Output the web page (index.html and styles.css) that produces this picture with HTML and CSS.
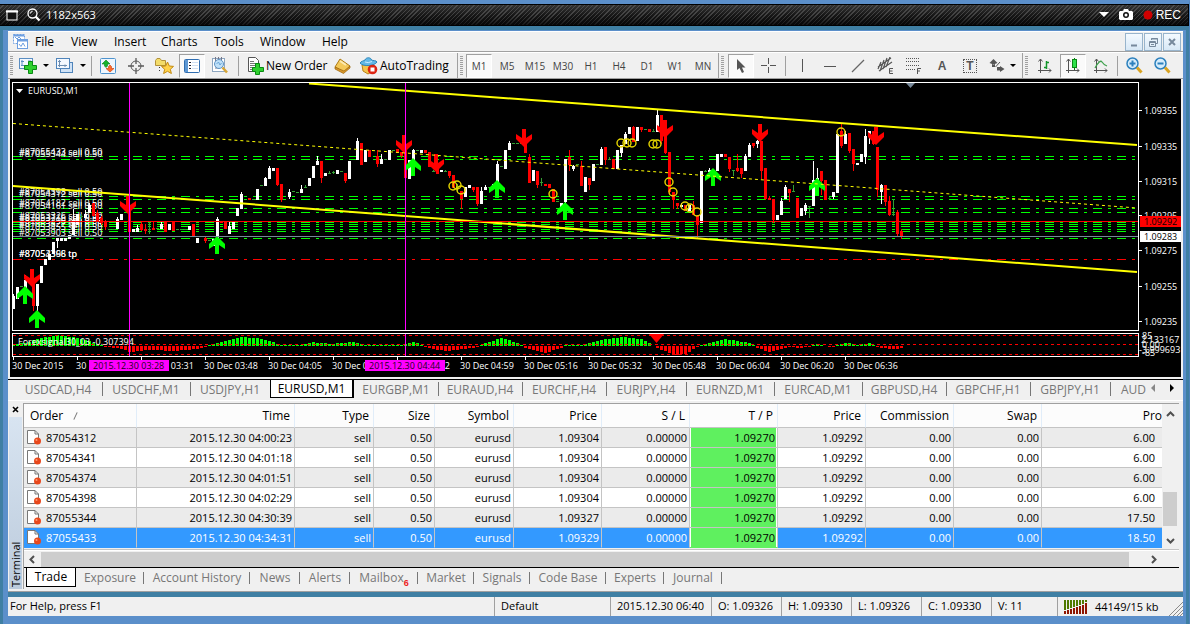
FILE: index.html
```html
<!DOCTYPE html>
<html lang="en">
<head>
<meta charset="utf-8">
<title>EURUSD,M1</title>
<link rel="stylesheet" href="styles.css">
</head>
<body>
<div class="screen">
<header class="recorder">
  <svg class="rec-window" width="12" height="11"><rect x="1" y="1" width="10" height="9" fill="#111" stroke="#fff"/><path d="M0 1.500H12" stroke="#fff" stroke-width="2"/></svg>
  <svg class="rec-zoom" width="14" height="14" fill="none" stroke="#fff"><circle cx="5.500" cy="5.500" r="4.500" stroke-width="1.300"/><path d="M3.500 5.500a2 2 0 0 1 2-2"/><path d="M8.500 8.500L12.500 12.500" stroke-width="2.400"/></svg>
  <span class="rec-size">1182x563</span>
  <svg class="rec-caret" width="10" height="6"><path d="M0 0H10L5 5Z" fill="#fff"/></svg>
  <svg class="rec-camera" width="14" height="12"><path d="M1 2H4L5 0H9L10 2H13L14 3V10L13 11H1L0 10V3Z" fill="#fff"/><circle cx="7" cy="6" r="3" fill="#111"/><circle cx="7" cy="6" r="1.500" fill="#fff"/></svg>
  <svg class="rec-dot" width="10" height="10"><circle cx="5" cy="5" r="4.500" fill="#d00000"/></svg>
  <span class="rec-label">REC</span>
</header>

<main class="window">
  <nav class="menubar">
    <svg class="app-icon" width="15" height="15" fill="none" stroke="#6e9fe0"><rect x=".5" y=".5" width="11" height="9" fill="#fff" stroke-dasharray="2 1"/><path d="M2 3L4 5L6 3L8 5"/><path d="M.5 1.500H11" stroke-width="2"/><rect x="4.500" y="5.500" width="10" height="9" fill="#fff"/><path d="M4.500 6.500H14" stroke-width="2"/><path d="M6 10L8 12.500L10 9L12 12.500"/></svg>
    <button class="menu m-file">File</button>
    <button class="menu m-view">View</button>
    <button class="menu m-insert">Insert</button>
    <button class="menu m-charts">Charts</button>
    <button class="menu m-tools">Tools</button>
    <button class="menu m-window">Window</button>
    <button class="menu m-help">Help</button>
    <div class="mdi">
      <button class="mdi-btn" aria-label="Minimize"><svg width="16" height="16"><path d="M5 11.500H11" stroke="#77899c" stroke-width="2"/></svg></button>
      <button class="mdi-btn" aria-label="Restore"><svg width="16" height="16" fill="none" stroke="#77899c"><path d="M6.500 6V4.500H12.500V9.500H11M6 5H13"/><path d="M4.500 7.500H10.500V12.500H4.500ZM4 8.500H11M6 10.500H9"/></svg></button>
      <button class="mdi-btn" aria-label="Close"><svg width="16" height="16"><path d="M5 5L11 11M11 5L5 11" stroke="#77899c" stroke-width="2"/></svg></button>
    </div>
  </nav>

  <div class="toolbar">
    <div class="group g-main">
      <i class="grip"></i>
      <button class="tool drop" aria-label="New chart"><svg width="19" height="17"><rect x=".5" y="1.500" width="13" height="10" fill="#f4f9ff" stroke="#5b8ec2"/><path d="M3 3V9M2 4.500H5M2 8.500H6M9 4H12" stroke="#5b8ec2" fill="none"/><path d="M9.500 4.500H13.500V8.500H17.500V12.500H13.500V16.500H9.500V12.500H5.500V8.500H9.500Z" fill="#2fd02f" stroke="#0a8a14"/></svg><span class="caret"></span></button>
      <button class="tool drop" aria-label="Profiles"><svg width="19" height="17"><rect x="4.500" y="5.500" width="12" height="10" fill="#cfe2f6" stroke="#4f84ba"/><rect x=".5" y="1.500" width="13" height="10" fill="#f4f9ff" stroke="#4f84ba"/><path d="M3.500 3V10M2 4.500H5M2 8.500H11M9 7.500V10" stroke="#6f8eb0" fill="none"/></svg><span class="caret"></span></button>
      <i class="sep"></i>
      <button class="tool" aria-label="Market Watch"><svg width="16" height="16"><rect x=".5" y=".5" width="15" height="15" rx="1" fill="#eff6fd" stroke="#4f94cf"/><path d="M6 2L10 6H7.500V8L6 9.500L4.500 8V6H2Z" fill="#16b32a" stroke="#08801a" stroke-width=".6"/><path d="M10 14L6 10.500H8.500V8.500L10 7L11.500 8.500V10.500H14Z" fill="#ff6a2b" stroke="#c93c08" stroke-width=".6"/></svg></button>
      <button class="tool" aria-label="Data Window"><svg width="16" height="16" fill="none" stroke="#5a5a5a"><circle cx="8" cy="8" r="5"/><path d="M8 0V6M8 10V16M0 8H6M10 8H16" stroke-width="1.300"/></svg></button>
      <button class="tool" aria-label="Navigator"><svg width="19" height="17"><path d="M.5 3.500L2 1.500H5L6.500 3.500H10.500V8.500H.5Z" fill="#f3dc6a" stroke="#b3923a"/><path d="M4.500 10V16" stroke="#333" stroke-dasharray="1 2"/><path d="M12.500 5L14.300 9L18.500 9.400L15.300 12.300L16.400 16.500L12.500 14.300L8.600 16.500L9.700 12.300L6.500 9.400L10.700 9Z" fill="#ffd24a" stroke="#c28a10"/></svg></button>
      <button class="tool pressed" aria-label="Terminal"><svg width="16" height="14"><rect x=".5" y=".5" width="15" height="13" rx="1" fill="#fff" stroke="#2f6db0"/><path d="M1 1H4V13H1Z" fill="#5d97d3"/><path d="M5 3.500H7M5 6.500H7M5 9.500H7" stroke="#223"/><path d="M8 3.500H14M8 6.500H14M8 9.500H14" stroke="#cfdff2"/></svg></button>
      <button class="tool" aria-label="Strategy Tester"><svg width="18" height="17"><rect x="1.500" y="1.500" width="12" height="13" fill="#fff" stroke="#8da6c0"/><path d="M4.500 0V4M7.500 0V3M10.500 0V3M4 11H8" stroke="#778"/><circle cx="8" cy="7" r="4.500" fill="#bfe0f8" stroke="#5e93c4"/><path d="M5.500 7L7.500 5L9 8L10.500 6" fill="none" stroke="#6aa6d8"/><path d="M11.500 10.500L16 15.500" stroke="#d7a536" stroke-width="2.600"/></svg></button>
      <i class="sep wide"></i>
      <button class="tool text t-order"><svg width="17" height="18"><path d="M1.500 .5H8.500L11.500 3.500V14.500H1.500Z" fill="#fff" stroke="#555"/><path d="M3 4.500H7M3 6.500H10M3 8.500H8M3 10.500H7M3 12.500H6" stroke="#777"/><path d="M8.500 6.500H12.500V10.500H16.500V14.500H12.500V17.500H8.500V14.500H5.500V10.500H8.500Z" fill="#2fd02f" stroke="#0a8a14"/></svg>New Order</button>
      <button class="tool" aria-label="MetaEditor"><svg width="17" height="16"><path d="M6 1L16 8L10 14L1 9Z" fill="#f4c95a" stroke="#ad7a14"/><path d="M1 9L1 11L9.500 15.500L16 10V8L10 13Z" fill="#d8952a" stroke="#9a650c" stroke-width=".7"/><path d="M6 3L12 7" stroke="#fdeab0" stroke-width="2"/></svg></button>
      <button class="tool text t-auto"><svg width="18" height="18"><path d="M2 8L3 14L8 17L13 14L14 8Z" fill="#f3c34d" stroke="#b88318"/><path d="M0 6C1 4 4 4 5 3C6 0 11 0 11.500 3C13 4 16 3 17 5C15 9 3 10 0 6Z" fill="#62b8e6" stroke="#2c85ba"/><path d="M5 5Q8 6.500 12 4.500" fill="none" stroke="#c8eaff"/><circle cx="12.500" cy="12.500" r="4.800" fill="#dc2412"/><rect x="10.500" y="10.500" width="4" height="4" fill="#fff"/></svg>AutoTrading</button>
    </div>
    <div class="group g-frames">
      <i class="grip"></i>
      <button class="tool tf pressed">M1</button><button class="tool tf">M5</button><button class="tool tf">M15</button><button class="tool tf">M30</button><button class="tool tf">H1</button><button class="tool tf">H4</button><button class="tool tf">D1</button><button class="tool tf">W1</button><button class="tool tf">MN</button>
    </div>
    <div class="group g-draw">
      <i class="grip"></i>
      <button class="tool pressed" aria-label="Cursor"><svg width="14" height="16"><path d="M3 1V12L5.500 10L8 15L10 14L8 9.500H11.500Z" fill="#555"/></svg></button>
      <button class="tool" aria-label="Crosshair"><svg width="16" height="16"><path d="M7.500 0V6M7.500 9V15M0 7.500H6M9 7.500H15" stroke="#555"/></svg></button>
      <i class="sep"></i>
      <button class="tool" aria-label="Vertical line"><svg width="16" height="16"><path d="M8.500 1V14" stroke="#555"/></svg></button>
      <button class="tool" aria-label="Horizontal line"><svg width="16" height="16"><path d="M2 8.500H14" stroke="#555"/></svg></button>
      <button class="tool" aria-label="Trendline"><svg width="16" height="16"><path d="M2 14L14 2" stroke="#666" stroke-width="1.300"/></svg></button>
      <button class="tool" aria-label="Channel"><svg width="18" height="18" stroke="#555" fill="none"><path d="M1 10L14 1M2 14L15 5M3 14L7 3M6 12L10 1M9 10L13 0M1 12L4 5" stroke-width="1.200"/><path d="M16 11.500H12.500V16.500H16M12.500 14H15.500"/></svg></button>
      <button class="tool" aria-label="Fibonacci"><svg width="18" height="18" stroke="#555" fill="none"><path d="M1 1.500H15M1 4.500H15M1 8.500H15M1 12.500H10" stroke-dasharray="1 1"/><path d="M12.500 17V11.500H16M12.500 14H15"/></svg></button>
      <button class="tool letter" aria-label="Text">A</button>
      <button class="tool letter" aria-label="Text label"><span class="tbox">T</span></button>
      <button class="tool drop" aria-label="Arrows"><svg width="16" height="15"><path d="M4.500 1L8.500 5L4.500 6.500L.5 5Z M3 6V9H6V6ZM8 9H11V8L15.500 11L11 14V12.500H8Z" fill="#555"/><path d="M6.500 9L11 4" stroke="#555"/></svg><span class="caret"></span></button>
    </div>
    <div class="group g-view">
      <i class="grip"></i>
      <button class="tool" aria-label="Bar chart"><svg width="16" height="16" fill="none" stroke="#555"><path d="M3.500 1V15M1 12.500H14M1.500 3.500L3.500 1L5.500 3.500M12 10.500L14 12.500L12 14.500"/><path d="M9.500 3V11M9 4.500H12M7 9.500H10" stroke="#12952a" stroke-width="1.500"/></svg></button>
      <button class="tool pressed" aria-label="Candlesticks"><svg width="16" height="16" fill="none" stroke="#555"><path d="M3.500 1V15M1 12.500H14M1.500 3.500L3.500 1L5.500 3.500M12 10.500L14 12.500L12 14.500"/><path d="M9.500 0V12" stroke="#0a7a14"/><rect x="7.500" y="1.500" width="4" height="8" fill="#2ee24a" stroke="#0a8a14"/></svg></button>
      <button class="tool" aria-label="Line chart"><svg width="16" height="16" fill="none" stroke="#555"><path d="M3.500 1V15M1 12.500H14M1.500 3.500L3.500 1L5.500 3.500M12 10.500L14 12.500L12 14.500"/><path d="M2 10Q7 1 9 4T14 8" stroke="#3ea04c" stroke-width="1.300"/></svg></button>
      <i class="sep"></i>
      <button class="tool" aria-label="Zoom in"><svg width="17" height="17"><circle cx="6.500" cy="6.500" r="5.500" fill="#d5ecfb" stroke="#2c80bd" stroke-width="1.500"/><path d="M6.500 3.500V9.500M3.500 6.500H9.500" stroke="#2c80bd" stroke-width="2"/><path d="M11 10.500L15.500 15.500" stroke="#d9a321" stroke-width="3"/></svg></button>
      <button class="tool" aria-label="Zoom out"><svg width="17" height="17"><circle cx="6.500" cy="6.500" r="5.500" fill="#d5ecfb" stroke="#2c80bd" stroke-width="1.500"/><path d="M3.500 6.500H9.500" stroke="#2c80bd" stroke-width="2"/><path d="M11 10.500L15.500 15.500" stroke="#d9a321" stroke-width="3"/></svg></button>
    </div>
  </div>

  <section class="chart">
    <svg id="plot" class="plot"></svg>
    <svg id="scale" class="scale"></svg>
  </section>

  <nav class="chart-tabs">
    <button class="ctab w88">USDCAD,H4</button><button class="ctab w88">USDCHF,M1</button><button class="ctab w80 last">USDJPY,H1</button><button class="ctab w84 active">EURUSD,M1</button><button class="ctab w84">EURGBP,M1</button><button class="ctab w84">EURAUD,H4</button><button class="ctab w84">EURCHF,H4</button><button class="ctab w80">EURJPY,H4</button><button class="ctab w88">EURNZD,M1</button><button class="ctab w88">EURCAD,M1</button><button class="ctab w84">GBPUSD,H4</button><button class="ctab w84">GBPCHF,H1</button><button class="ctab w80">GBPJPY,H1</button><button class="ctab cut">AUD</button>
    <span class="tab-arrows"><svg width="4" height="8"><path d="M4 0V8L0 4Z" fill="#888"/></svg><svg width="4" height="8"><path d="M0 0V8L4 4Z" fill="#000"/></svg></span>
  </nav>

  <section class="terminal">
    <aside class="side">
      <button class="side-close" aria-label="Close"><svg width="7" height="7"><path d="M1 1L6 6M6 1L1 6" stroke="#000" stroke-width="1.600"/></svg></button>
      <div class="side-title">Terminal</div>
    </aside>
    <div class="panel">
      <div class="grid">
        <table class="orders">
          <colgroup><col class="c-order"><col class="c-time"><col class="c-type"><col class="c-size"><col class="c-sym"><col class="c-88"><col class="c-88"><col class="c-88"><col class="c-88"><col class="c-88"><col class="c-88"><col></colgroup>
          <thead><tr><th class="left">Order<span class="sort"></span></th><th>Time</th><th>Type</th><th>Size</th><th>Symbol</th><th>Price</th><th>S / L</th><th>T / P</th><th>Price</th><th>Commission</th><th>Swap</th><th class="end">Pro</th></tr></thead>
          <tbody id="rows"></tbody>
        </table>
        <div class="vscroll"><svg width="9" height="6"><path d="M1 5L4.500 1.500L8 5" fill="none" stroke="#505050" stroke-width="2"/></svg><span class="vthumb"></span><svg width="9" height="6"><path d="M1 1L4.500 4.500L8 1" fill="none" stroke="#505050" stroke-width="2"/></svg></div>
      </div>
      <div class="hscroll"><svg width="6" height="9"><path d="M5 1L1.500 4.500L5 8" fill="none" stroke="#505050" stroke-width="2"/></svg><span class="hthumb"></span><svg width="6" height="9"><path d="M1 1L4.500 4.500L1 8" fill="none" stroke="#505050" stroke-width="2"/></svg></div>
      <nav class="term-tabs">
        <button class="ttab active">Trade</button><button class="ttab t68">Exposure</button><button class="ttab t106">Account History</button><button class="ttab t50">News</button><button class="ttab t50">Alerts</button><button class="ttab t68">Mailbox<sub class="badge">6</sub></button><button class="ttab t56">Market</button><button class="ttab t56">Signals</button><button class="ttab t76">Code Base</button><button class="ttab t58">Experts</button><button class="ttab t58">Journal</button>
      </nav>
    </div>
  </section>

  <footer class="status">
    <span class="st help">For Help, press F1</span>
    <span class="st s-profile">Default</span>
    <span class="st s-date">2015.12.30 06:40</span>
    <span class="st s-val">O: 1.09326</span>
    <span class="st s-val">H: 1.09330</span>
    <span class="st s-val">L: 1.09326</span>
    <span class="st s-val">C: 1.09330</span>
    <span class="st s-vol">V: 11</span>
    <span class="st s-net"><svg width="24" height="14"><path d="M1 0V10M4 0V9M7 0V8M10 0V7M13 0V6M16 0V5M19 0V4M22 0V2" stroke="#4f7a00" stroke-width="2"/><path d="M1 11V14M4 10V14M7 9V14M10 8V14M13 7V14M16 6V14M19 5V14M22 3V14" stroke="#8f1500" stroke-width="2"/></svg>44149/15 kb</span>
    <svg class="size-grip" width="15" height="15" stroke="#8a8a8a"><path d="M1 15L15 1M5 15L15 5M9 15L15 9M12 15L15 12"/></svg>
  </footer>
</main>
</div>
<script src="chart.js"></script>
</body>
</html>
```
FILE: styles.css
```css
* { box-sizing: border-box; }
body { margin: 0; background: #3f7fa3; font: 12px/16px "Open Sans", "Noto Sans", sans-serif; color: #000; }
button { font: inherit; color: inherit; background: none; border: 0; padding: 0; margin: 0; }
svg { display: block; flex: none; }

.screen { border-top: 4px solid #5b8fca; border-right: 1px solid #4d82bb; }

.recorder { display: flex; align-items: center; height: 22px; padding: 0 7px 0 6px; margin-bottom: 4px; color: #fff;
  border: 1px solid #000; border-left: 0;
  background: linear-gradient(rgba(90,90,90,.45), rgba(40,40,40,.1) 50%, rgba(0,0,0,.7)), repeating-linear-gradient(135deg, #151515 0 2px, #454545 2px 3px); }
.rec-zoom { margin-left: 9px; }
.rec-size { margin-left: 5px; font-size: 11px; }
.rec-caret { margin-left: auto; }
.rec-camera { margin-left: 10px; }
.rec-dot { margin-left: 10px; }
.rec-label { margin-left: 3px; font: 12px/16px "Liberation Sans", sans-serif; }

.window { margin: 0 3px 0 3px; border: solid #5b8fca; border-width: 1px 3px 8px 5px; background: #f0f0f0; }

.menubar { display: flex; align-items: center; height: 21px; padding-left: 5px; border-top: 1px solid #fff; border-bottom: 1px solid #a0a0a0; }
.menu { text-align: left; }
.app-icon { margin-right: 7px; }
.m-file { width: 36px; }
.m-view { width: 43px; }
.m-insert { width: 47px; }
.m-charts { width: 53px; }
.m-tools { width: 46px; }
.m-window { width: 62px; }
.mdi { display: flex; gap: 1px; margin-left: auto; padding-right: 2px; }
.mdi-btn { width: 18px; height: 18px; border: 1px solid #98b4cc; background: linear-gradient(#f4faff, #d8e8f6); }

.toolbar { display: flex; height: 27px; border-top: 1px solid #fff; border-bottom: 1px solid #a0a0a0; }
.group { display: flex; align-items: center; padding-left: 2px; border-right: 1px solid #a0a0a0; }
.g-main { width: 450px; }
.g-frames { width: 261px; }
.g-draw { width: 304px; }
.g-view { flex: 1; border: 0; }
.grip { width: 3px; height: 19px; margin-right: 2px; background: repeating-linear-gradient(#a0a0a0 0 1px, #f0f0f0 1px 2px); }
.g-draw .grip, .g-view .grip { margin-right: 3px; }
.tool { display: flex; align-items: center; justify-content: center; width: 28px; height: 24px; flex: none; }
.pressed { border: 1px solid #fff; border-top-color: #a0a0a0; border-left-color: #a0a0a0; background: #fafafa; width: 26px; margin: 0 1px; }
.drop { width: 37px; gap: 5px; }
.caret { border: 3px solid transparent; border-top-color: #000; border-bottom: 0; }
.sep { width: 5px; height: 20px; background: linear-gradient(#a0a0a0, #a0a0a0) center / 1px 100% no-repeat; }
.sep.wide { width: 8px; }
.text { justify-content: flex-start; gap: 2px; }
.t-order { width: 86px; padding-left: 5px; }
.t-auto { width: 96px; padding-left: 4px; }
.tf { font-size: 10px; color: #444; }
.letter { font: bold 12px/16px "Liberation Sans", sans-serif; color: #555; }
.tbox { width: 14px; height: 14px; line-height: 13px; border: 1px dotted #555; }

.chart { display: flex; margin: 0 2px; background: #000; }
.plot { flex: 1; min-width: 0; height: 298px; overflow: hidden; }
.scale { width: 43px; height: 298px; overflow: hidden; }
.txt { fill: #fff; font-size: 9px; }

.chart-tabs { display: flex; height: 21px; padding-left: 6px; margin-top: 2px; border-top: 1px solid #000; color: #777; overflow: hidden; }
.ctab { position: relative; flex: none; height: 18px; line-height: 17px; font-size: 12px; text-align: center; }
.ctab::after { content: ""; position: absolute; right: -1px; top: 2px; width: 1px; height: 14px; background: #777; }
.w80 { width: 80px; }
.w84 { width: 84px; }
.w88 { width: 88px; }
.last::after, .cut::after, .active::after { display: none; }
.ctab.active { color: #000; background: #fff; border: solid #000; border-width: 0 2px 1px 1px; }
.cut { width: 35px; padding-left: 11px; text-align: left; }
.tab-arrows { display: flex; gap: 15px; align-items: center; margin-left: auto; padding: 0 9px 4px 0; }

.terminal { display: flex; border-top: 1px solid #fff; border-bottom: 1px solid #a0a0a0; }
.side { display: flex; flex-direction: column; width: 14px; padding-bottom: 2px; }
.side-close { display: flex; align-items: center; justify-content: center; height: 16px; }
.side-title { flex: 1; margin: 0 0 0 1px; background: linear-gradient(#bccbdc, #d8e4f1); writing-mode: vertical-rl; transform: rotate(180deg); font-size: 11px; line-height: 13px; padding-top: 2px; }
.panel { flex: 1; min-width: 0; margin: 2px 4px 2px 1px; border-top: 1px solid #a0a0a0; border-left: 1px solid #a0a0a0; }
.grid { display: flex; padding-bottom: 1px; border-bottom: 1px solid #c4c4c4; }
.orders { flex: 1; width: 0; table-layout: fixed; border-spacing: 0; font-size: 11px; line-height: 15px; background: #fff; }
.c-order { width: 113px; }
.c-time { width: 158px; }
.c-type { width: 79px; }
.c-size { width: 61px; }
.c-sym { width: 79px; }
.c-88 { width: 88px; }
.orders th { height: 24px; padding: 0 4px 0 0; font-size: 12px; font-weight: 400; text-align: right; border-right: 1px solid #e1edf9; border-bottom: 1px solid #c4c4c4; background: #fcfcfc; white-space: nowrap; }
.orders th.left { text-align: left; padding-left: 6px; }
.orders th.end { padding: 0; border-right: 0; }
.sort { display: inline-block; width: 1px; height: 8px; margin-left: 12px; background: #777; transform: rotate(25deg); }
.orders td { height: 20px; padding: 0 2px 0 0; text-align: right; border-right: 1px solid #c4c4c4; border-bottom: 1px solid #c4c4c4; }
.orders td:last-child { padding-right: 7px; border-right: 0; }
.orders tr.odd td { background: #ebebeb; }
.orders tr.sel td { background: #3399ff; color: #fff; border-bottom-color: #3399ff; }
.orders tbody tr td.tp { background: #5ff05f; color: #000; box-shadow: inset -1px 0 #fff, inset 1px 0 #fff; }
.orders tr.sel td.tp { border-bottom-color: #5ff05f; }
.order-id { display: flex; align-items: center; gap: 5px; padding-left: 3px; }
.vscroll { display: flex; flex-direction: column; align-items: center; width: 16px; margin-right: 1px; padding: 7px 0 4px; background: #f0f0f0; }
.vthumb { width: 14px; height: 34px; margin: auto 0 12px; background: #cdcdcd; }
.hscroll { display: flex; align-items: center; height: 17px; padding: 0 22px 0 5px; border-top: 1px solid #fff; }
.hthumb { flex: 1; height: 15px; margin: 0 22px 0 6px; background: #cdcdcd; }
.term-tabs { display: flex; height: 22px; padding-left: 2px; border-top: 1px solid #000; color: #777; }
.ttab { position: relative; height: 19px; line-height: 18px; flex: none; font-size: 12px; }
.ttab::after { content: ""; position: absolute; right: 0; top: 4px; width: 1px; height: 12px; background: #777; }
.ttab.active { width: 50px; color: #000; background: #fff; border: solid #000; border-width: 0 1px 1px 1px; }
.ttab.active::after { display: none; }
.t50 { width: 50px; }
.t56 { width: 56px; }
.t58 { width: 58px; }
.t68 { width: 68px; }
.t76 { width: 76px; }
.t106 { width: 106px; }
.badge { color: #e22; font: bold 9px/1px "Liberation Sans", sans-serif; vertical-align: -4px; }

.status { display: flex; height: 24px; border-top: 5px solid #3f7fa3; font-size: 11px; line-height: 18px; }
.st { padding-left: 6px; border-left: 1px solid #a0a0a0; white-space: nowrap; }
.help { flex: 1; border: 0; padding-left: 2px; }
.s-profile { width: 116px; }
.s-date { width: 101px; }
.s-val { width: 70px; }
.s-vol { width: 66px; }
.s-net { display: flex; align-items: center; gap: 7px; width: 111px; }
.size-grip { align-self: flex-end; }
```
FILE: chart.js
```js
// Candles: x, body top, body bottom, wick top, wick bottom, colour (w, r, g)
const candles = `13 296 309 294 309 w;17 287 299 287 299 w;21 286 287 286 287 g;25 280 288 275 288 w;33 279 306 279 311 r;37 284 306 284 312 w;41 266 283 266 283 w;45 259 265 259 265 w;49 254 260 254 260 w;53 242 254 242 254 w;57 238 241 238 248 w;61 238 241 238 241 w;65 238 241 238 241 w;69 235 239 235 239 w;73 220 235 209 235 w;77 214 225 214 225 w;81 216 217 214 219 g;85 214 218 210 218 w;89 205 213 203 213 w;93 203 216 203 216 r;97 213 222 210 222 r;101 218 223 216 225 r;105 222 227 220 230 r;109 229 230 229 230 g;113 229 230 229 230 g;117 219 229 217 229 w;121 214 220 214 220 w;129 210 232 210 232 r;133 229 232 229 232 w;137 228 232 225 232 w;141 224 230 222 231 r;145 229 231 224 234 r;149 229 230 222 234 g;153 228 230 222 230 r;157 228 229 228 229 g;161 224 229 222 229 w;165 222 232 222 232 r;169 224 230 224 230 w;173 221 231 221 231 r;177 229 230 229 230 g;181 229 230 229 230 g;185 229 230 229 230 g;189 226 230 226 230 w;193 224 237 224 237 r;197 238 243 238 243 w;205 238 241 236 243 r;209 240 241 240 241 g;213 239 246 239 246 w;217 219 239 217 239 w;221 221 223 221 223 r;225 222 229 222 229 r;229 226 234 222 234 w;233 221 229 221 229 w;237 208 216 208 216 w;241 194 209 192 209 w;249 198 200 198 200 r;253 199 200 199 200 g;257 189 200 189 200 w;261 185 186 185 186 g;265 178 186 177 186 w;269 168 179 166 179 w;273 168 171 168 171 w;277 168 185 168 186 r;281 184 200 184 202 r;289 192 197 189 199 w;293 191 192 191 192 g;297 192 193 192 193 g;301 189 193 185 193 w;305 187 188 185 188 g;309 178 186 178 186 w;313 166 178 166 178 w;317 161 165 156 165 w;321 161 178 161 183 r;325 173 176 173 176 w;329 173 174 171 174 g;333 172 173 171 174 g;337 170 174 170 174 w;341 171 172 171 172 g;345 173 181 173 183 r;349 161 179 161 179 w;357 141 160 138 160 w;361 143 165 143 165 r;365 150 162 150 162 w;369 150 157 150 157 r;377 156 164 150 167 r;381 159 164 154 164 w;385 159 160 159 160 g;389 150 160 150 160 w;393 150 151 150 151 g;397 149 153 149 153 r;401 152 156 152 158 r;405 150 178 150 183 r;409 160 179 160 179 w;413 150 160 149 160 w;417 150 151 150 151 g;421 150 153 150 153 w;425 150 153 150 153 r;429 152 167 152 167 r;433 171 172 170 172 g;437 168 174 168 174 r;441 170 172 170 172 w;445 171 172 170 172 g;449 171 176 171 178 r;453 175 188 175 188 r;457 186 188 184 192 g;461 191 199 191 209 r;465 187 197 187 197 w;469 185 188 185 188 w;473 187 190 187 192 r;477 187 204 187 206 r;481 191 204 187 204 w;485 187 190 185 190 w;489 187 188 187 188 g;493 184 186 184 186 w;497 164 183 161 183 w;501 166 167 166 167 g;505 150 169 150 169 w;509 143 150 141 150 w;513 143 144 143 144 g;517 143 144 143 144 g;521 143 144 143 144 g;525 143 153 143 153 r;529 157 183 154 183 r;533 170 181 170 181 w;537 171 185 171 188 r;541 182 183 178 186 g;545 184 186 184 186 r;549 184 188 184 188 r;553 189 202 189 202 r;557 201 202 201 202 g;561 203 207 203 207 w;565 159 202 159 204 w;569 157 165 150 171 r;573 166 169 165 171 w;577 164 165 164 165 g;581 166 186 161 186 r;585 177 192 177 192 w;589 178 185 178 190 r;593 164 181 164 181 w;597 164 165 164 165 g;601 149 165 147 165 w;605 147 160 147 165 r;609 159 160 157 160 g;613 159 169 159 169 r;617 150 169 150 169 w;621 145 153 145 157 w;625 134 144 132 144 w;629 127 134 127 134 w;633 127 142 126 142 r;637 127 141 127 141 w;641 127 130 127 132 r;645 129 130 129 130 g;649 129 132 129 132 r;653 131 132 129 132 g;657 115 132 110 132 w;661 115 141 115 144 r;665 120 153 120 154 r;669 152 192 152 195 r;673 192 200 192 209 r;677 203 206 203 209 r;681 205 207 203 207 w;685 205 211 205 211 r;689 205 211 205 211 w;693 205 215 201 215 r;697 216 225 215 238 r;701 171 223 171 223 w;705 171 172 170 172 g;709 170 172 168 172 w;717 154 171 154 171 w;721 154 157 154 157 w;725 154 157 154 157 r;729 157 169 157 172 r;733 170 171 170 176 g;737 168 171 154 172 r;741 168 174 168 178 r;745 156 171 154 171 w;749 145 157 143 157 w;753 143 146 143 148 r;757 141 144 140 148 w;761 141 171 141 179 r;765 168 199 168 200 r;769 198 200 196 200 r;773 199 220 199 223 r;777 215 220 215 220 w;781 201 215 198 215 w;785 187 199 185 199 w;789 189 193 189 202 r;793 191 192 185 192 g;797 198 218 198 218 r;801 208 216 208 216 w;805 205 211 203 215 w;809 206 207 206 218 g;813 180 206 161 206 w;817 178 184 168 184 w;821 171 181 171 195 r;825 180 200 180 200 r;829 198 199 197 199 g;833 192 197 192 199 w;837 134 193 134 193 w;841 131 146 124 148 r;845 134 144 131 144 w;849 133 151 133 153 r;853 149 164 149 171 r;857 163 165 163 165 w;861 154 162 154 162 w;865 136 157 129 164 w;869 131 135 131 144 w;873 131 144 131 145 r;877 147 190 147 197 r;881 185 192 184 204 w;885 185 202 185 206 r;889 201 215 196 216 r;893 214 215 199 216 g;897 212 234 210 237 r;901 231 237 229 239 r`;
const colours = { w: "#fff", r: "#ff0000", g: "#32a032" };

// Oscillator envelope: x, height above (+) or below (-) the zero line
const envelope = [[13,2],[25,3],[37,7],[57,11],[77,8],[98,2],[103,0],[106,-1],[124,-3],[129,-6],[150,-4],[173,-5],[198,-3],[206,-1],[209,1],[225,5],[240,9],[257,8],[270,5],[280,1],[300,1],[312,4],[330,2],[352,4],[365,1],[400,1],[413,4],[422,1],[426,-2],[445,-5],[465,-3],[478,-1],[482,2],[502,8],[520,2],[525,-2],[545,-7],[561,-2],[565,1],[582,1],[605,7],[622,9],[640,7],[652,1],[657,-2],[673,-9],[685,-8],[697,-1],[701,1],[725,7],[750,3],[755,-1],[768,-6],[790,-1],[798,-2],[811,-1],[813,1],[818,2],[823,1],[826,-1],[834,-1],[838,1],[846,3],[858,1],[870,3],[876,-1],[888,-3],[897,-3],[901,-2]];

const rect = (x, y, w, h, c) => `<rect x="${x}" y="${y}" width="${w}" height="${h}" fill="${c}"/>`;
const line = (x1, y1, x2, y2, c, extra = "") => `<line x1="${x1}" y1="${y1}" x2="${x2}" y2="${y2}" stroke="${c}" ${extra}/>`;
const text = (x, y, s, fill = "#fff") => `<text class="txt" x="${x}" y="${y}" style="fill:${fill}">${s}</text>`;
const far = 4000;

function heightAt(x) {
  for (let i = 1; i < envelope.length; i++) {
    const [x0, v0] = envelope[i - 1], [x1, v1] = envelope[i];
    if (x <= x1) return Math.round(v0 + (v1 - v0) * (x - x0) / (x1 - x0));
  }
  return 0;
}

function drawPlot() {
  let s = "";
  for (const y of [156, 159, 196, 199, 208, 212, 222, 224, 226, 229, 231, 238])
    s += line(13, y + .5, far, y + .5, "#00ff00", 'stroke-dasharray="9 6 3 6"');
  s += line(13, 259.5, far, 259.5, "#ff0000", 'stroke-dasharray="9 6 3 6"');

  const labels = [[155, "#87055433 sell 0.50"], [157, "#87055344 sell 0.50"], [195, "#87054398 sell 0.50"], [197, "#87054312 sell 0.50"],
    [206, "#87054182 sell 0.50"], [209, "#87054161 sell 0.50"], [219, "#87053326 sell 0.50"], [221, "#87053716 sell 0.50"], [224, "#87053296 sell 0.50"],
    [227, "#87053827 sell 0.50"], [230, "#87053455 sell 0.50"], [236, "#87053903 sell 0.50"], [257, "#87054398 tp"], [257, "#87053366 tp"]];
  for (const [y, t] of labels) s += text(19, y, t);

  for (const c of candles.split(";")) {
    const [x, a, b, t, u, k] = c.split(" ");
    s += rect(+x, +t, 1, u - t, colours[k]) + rect(x - 1, +a, 3, b - a, colours[k]);
  }
  for (const [x, y] of [[453,186],[457,185],[461,190],[553,194],[621,143],[627,143],[632,143],[653,144],[657,144],[669,182],[673,192],[685,206],[690,208],[697,212],[841,132]])
    s += `<circle cx="${x}" cy="${y}" r="4" fill="none" stroke="#e8d800" stroke-width="1.4"/>`;
  for (const [x, y] of [[25,286],[37,310],[217,236],[413,158],[497,180],[565,202],[713,168],[817,178]])
    s += `<path d="M${x} ${y}l8 8v5l-6-4v9h-4v-9l-6 4v-5z" fill="#00ff00"/>`;
  for (const [x, y] of [[32,287],[128,214],[404,153],[436,172],[524,147],[665,138],[760,142],[876,145]])
    s += `<path d="M${x} ${y}l8-8v-5l-6 4v-9h-4v9l-6-4v5z" fill="#ff0000"/>`;

  s += line(309, 83.5, 1137, 145, "#ffff00", 'stroke-width="2"');
  s += line(13, 186, 1137, 272, "#ffff00", 'stroke-width="2"');
  s += line(13, 123.5, 1137, 208, "#ffff00", 'stroke-dasharray="3 3"');
  s += rect(13, 221, far, 1, "#ff0000") + rect(13, 236, far, 1, "#778899");
  s += '<path d="M906 83h9l-4.5 5z" fill="#778899"/>';

  for (let x = 13; x <= 901; x += 4) {
    const h = heightAt(x);
    if (h > 0) s += rect(x - 1, 346 - h, 3, h, "#00ff00");
    if (h < 0) s += rect(x - 1, 346, 3, -h, "#ff0000");
  }
  for (const y of [335, 344, 354]) s += line(13, y + .5, far, y + .5, "#ff0000", 'stroke-dasharray="3 3"');
  s += '<path d="M649 334h15l-7.500 9z" fill="#ff0000"/>';
  s += text(18, 345, "Forexsignal30_03 -0.307394");
  s += rect(129, 83, 1, 273, "#ff00ff") + rect(405, 83, 1, 273, "#ff00ff");
  s += rect(10, 331, far, 2, "#000");
  for (const y of [82, 330, 333, 356]) s += rect(12, y, far, 1, "#fff");
  s += rect(12, 82, 1, 249, "#fff") + rect(12, 333, 1, 24, "#fff");

  const times = ["2015", "03:15", "03:31", "03:48", "04:05", "04:21", "04:42", "04:59", "05:16", "05:32", "05:48", "06:04", "06:20", "06:36"];
  times.forEach((t, i) => { s += rect(13 + i * 64, 357, 1, 3, "#fff") + text(12 + i * 64, 369, "30 Dec " + t); });
  for (const [x, t] of [[89, "2015.12.30 03:28"], [365, "2015.12.30 04:44"]])
    s += rect(x, 360, 80, 11, "#ff00ff") + text(x + 4, 369, t, "#200020");
  s += '<path d="M16 89h7l-3.500 4z" fill="#fff"/>' + text(28, 94, "EURUSD,M1");
  document.getElementById("plot").innerHTML = `<g transform="translate(-10 -79)">${s}</g>`;
}

function drawScale() {
  let s = rect(1137, 82, 1, 249, "#fff") + rect(1137, 333, 1, 24, "#fff");
  [["1.09355", 110], ["1.09335", 146], ["1.09315", 181], ["1.09295", 215], ["1.09275", 250], ["1.09255", 286], ["1.09235", 321]]
    .forEach(([t, y]) => { s += rect(1138, y, 3, 1, "#fff") + text(1143, y + 4, t); });
  s += rect(1139, 216, 41, 11, "#ff0000") + text(1143, 225, "1.09292", "#000");
  s += rect(1139, 231, 41, 11, "#fff") + text(1143, 240, "1.09283", "#000");
  for (const [x, y, t] of [[1141, 339, "85"], [1140, 343, "2.133167"], [1141, 348, "0.00"], [1138, 353, "-3.999693"], [1141, 356, "-85"]]) s += text(x, y, t);
  document.getElementById("scale").innerHTML = `<g transform="translate(-1137 -79)">${s}</g>`;
}

function fillOrders() {
  const icon = '<svg width="14" height="15"><path d="M.5 .5H8L11.500 4V13.500H.5Z" fill="#fff" stroke="#777"/><path d="M8 .5V4H11.500" fill="none" stroke="#777"/><circle cx="10.500" cy="11" r="3.500" fill="#e8481c"/><circle cx="9.500" cy="10" r="1" fill="#ff9a70"/></svg>';
  const data = [["87054312", "04:00:23", "1.09304", "6.00"], ["87054341", "04:01:18", "1.09304", "6.00"], ["87054374", "04:01:51", "1.09304", "6.00"],
    ["87054398", "04:02:29", "1.09304", "6.00"], ["87055344", "04:30:39", "1.09327", "17.50"], ["87055433", "04:34:31", "1.09329", "18.50"]];
  document.getElementById("rows").innerHTML = data.map(([id, t, p, profit], i) =>
    `<tr class="${i === 5 ? "sel" : i % 2 ? "" : "odd"}"><td><span class="order-id">${icon}${id}</span></td><td>2015.12.30 ${t}</td><td>sell</td><td>0.50</td><td>eurusd</td><td>${p}</td><td>0.00000</td><td class="tp">1.09270</td><td>1.09292</td><td>0.00</td><td>0.00</td><td>${profit}</td></tr>`).join("");
}

drawPlot();
drawScale();
fillOrders();
```
